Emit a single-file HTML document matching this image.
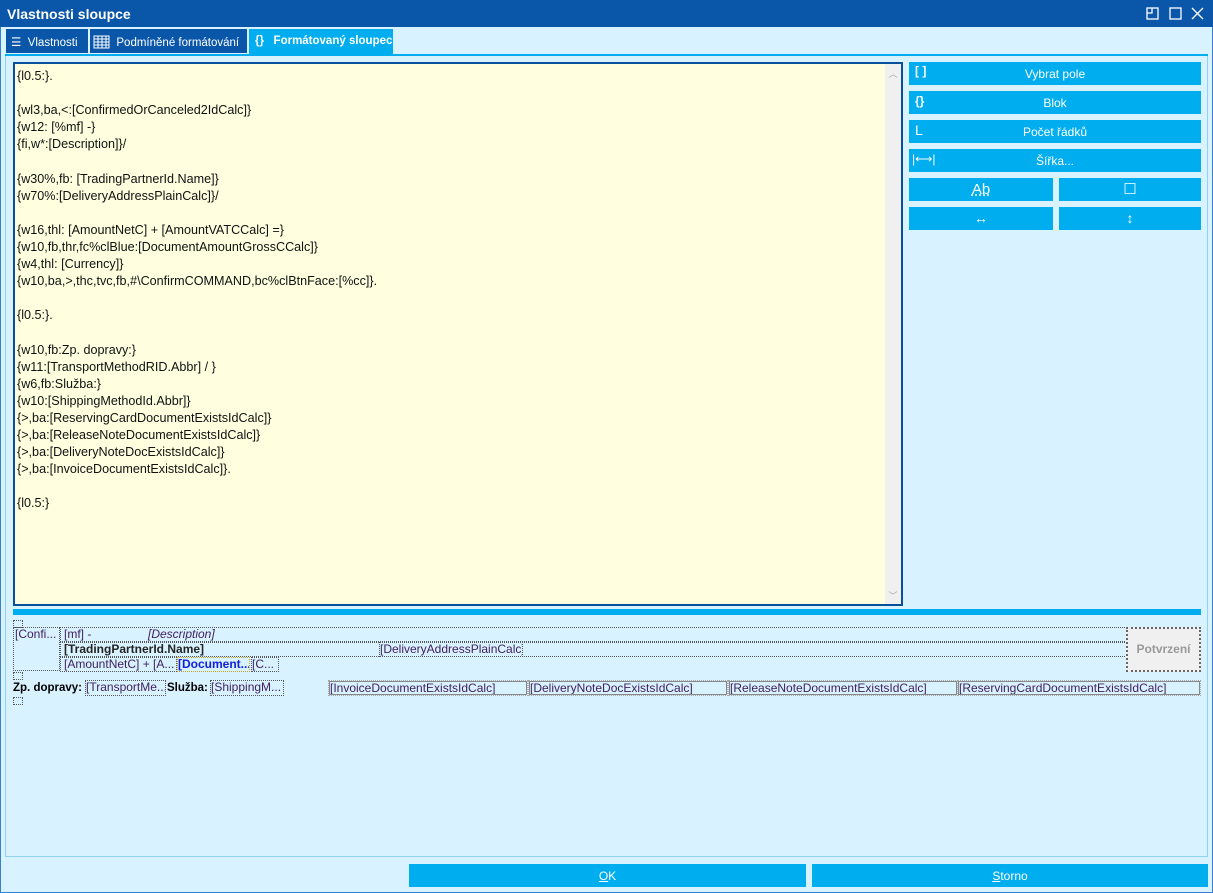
<!DOCTYPE html>
<html><head><meta charset="utf-8"><style>
*{box-sizing:border-box;margin:0;padding:0}
body{width:1213px;height:893px;background:#d9f2ff;font-family:"Liberation Sans",sans-serif;font-size:12px;position:relative;overflow:hidden}
.a{position:absolute}
#title{left:0;top:0;width:1213px;height:27px;background:#0a56a8;color:#fff;font-weight:bold;font-size:14px;padding:6px 7px}
.tab{top:29px;height:24px;background:#0a56a8;color:#fff;font-size:11.5px;padding:6px 0 0 0;white-space:nowrap;overflow:hidden}
.btn{background:#00adef;color:#fff;text-align:center;font-size:12px}
#ed{left:13px;top:62px;width:890px;height:544px;background:#ffffe0;border:2px solid #0a4f9a}
#ed pre{font-family:"Liberation Sans",sans-serif;font-size:12.6px;line-height:17.1px;color:#111;position:absolute;left:2px;top:4px}
.d{border:1px dotted #555;position:absolute;white-space:nowrap;overflow:hidden;color:#402060;font-size:12px;line-height:13px}
.g{border:1px solid #888;outline:1px dotted #aaa}
</style></head><body>
<div class="a" style="left:0;top:0;width:1213px;height:893px;border:1px solid #3a7fd0"></div>
<div id="title" class="a">Vlastnosti sloupce</div>
<svg class="a" style="left:1145px;top:6px" width="62" height="16" viewBox="0 0 62 16" fill="none" stroke="#fff" stroke-width="1.3">
<rect x="2" y="2" width="11" height="11"/><path d="M2 7H7V2"/>
<rect x="25" y="2" width="11" height="11"/>
<path d="M47 2L58 13M58 2L47 13"/></svg>
<div class="a tab" style="left:6px;width:82px"><span style="margin-left:5px">☰</span>&nbsp; Vlastnosti</div>
<div class="a tab" style="left:90px;width:157px"><svg width="17" height="14" style="vertical-align:-3px;margin-left:3px" viewBox="0 0 17 14" fill="none" stroke="#fff"><rect x="1" y="1" width="15" height="12"/><path d="M1 4H16M1 7H16M1 10H16M5 1V13M9 1V13M13 1V13"/></svg>&nbsp; Podmíněné formátování</div>
<div class="a tab" style="left:249px;width:144px;background:#00adef;font-weight:bold;height:25px"><span style="margin-left:6px">{}</span>&nbsp;&nbsp; Formátovaný sloupec</div>
<div class="a" style="left:5px;top:54px;width:1203px;height:2px;background:#00adef"></div>
<div class="a" style="left:5px;top:56px;width:1203px;height:801px;border:1px solid #8fd3f0;border-top:none"></div>
<div id="ed" class="a"><pre>{l0.5:}.

{wl3,ba,&lt;:[ConfirmedOrCanceled2IdCalc]}
{w12: [%mf] -}
{fi,w*:[Description]}/

{w30%,fb: [TradingPartnerId.Name]}
{w70%:[DeliveryAddressPlainCalc]}/

{w16,thl: [AmountNetC] + [AmountVATCCalc] =}
{w10,fb,thr,fc%clBlue:[DocumentAmountGrossCCalc]}
{w4,thl: [Currency]}
{w10,ba,&gt;,thc,tvc,fb,#\ConfirmCOMMAND,bc%clBtnFace:[%cc]}.

{l0.5:}.

{w10,fb:Zp. dopravy:}
{w11:[TransportMethodRID.Abbr] / }
{w6,fb:Služba:}
{w10:[ShippingMethodId.Abbr]}
{&gt;,ba:[ReservingCardDocumentExistsIdCalc]}
{&gt;,ba:[ReleaseNoteDocumentExistsIdCalc]}
{&gt;,ba:[DeliveryNoteDocExistsIdCalc]}
{&gt;,ba:[InvoiceDocumentExistsIdCalc]}.

{l0.5:}</pre>
<div class="a" style="right:0;top:0;width:16px;height:540px;background:#f0f0f0;color:#aaa;font-size:9px;text-align:center"><div style="margin-top:3px">︿</div><div style="position:absolute;bottom:2px;width:16px">﹀</div></div></div>
<div class="a btn" style="left:909px;top:62px;width:292px;height:23px;padding-top:5px">Vybrat pole<span class="a" style="left:6px;top:2px;font-weight:bold">[ ]</span></div>
<div class="a btn" style="left:909px;top:91px;width:292px;height:23px;padding-top:5px">Blok<span class="a" style="left:6px;top:3px;font-weight:bold">{}</span></div>
<div class="a btn" style="left:909px;top:120px;width:292px;height:23px;padding-top:5px">Počet řádků<span class="a" style="left:6px;top:2px;font-size:14px">L</span></div>
<div class="a btn" style="left:909px;top:149px;width:292px;height:23px;padding-top:5px">Šířka...<span class="a" style="left:3px;top:3px">|⟷|</span></div>
<div class="a btn" style="left:909px;top:178px;width:144px;height:23px;padding-top:3px;font-size:15px"><u style="text-decoration-style:dotted">Ab</u></div>
<div class="a btn" style="left:1059px;top:178px;width:142px;height:23px;padding-top:2px;font-size:15px">☐</div>
<div class="a btn" style="left:909px;top:207px;width:144px;height:23px;padding-top:3px;font-size:14px">↔</div>
<div class="a btn" style="left:1059px;top:207px;width:142px;height:23px;padding-top:3px;font-size:14px">↕</div>
<div class="a" style="left:13px;top:609px;width:1188px;height:6px;background:#00adef"></div>
<div class="d" style="left:13px;top:620px;width:10px;height:8px"></div>
<div class="d" style="left:13px;top:627px;width:47px;height:44px;padding-left:1px">[Confi...</div>
<div class="d" style="left:60px;top:627px;width:1067px;height:15px;padding-left:3px">[mf] -<span class="a" style="left:87px;top:0;font-style:italic">[Description]</span></div>
<div class="d" style="left:60px;top:642px;width:1067px;height:15px;padding-left:3px;font-weight:bold;color:#222">[TradingPartnerId.Name]</div>
<div class="d" style="left:379px;top:642px;width:144px;height:15px">[DeliveryAddressPlainCalc]</div>
<div class="d" style="left:60px;top:657px;width:117px;height:15px;padding-left:3px">[AmountNetC] + [A...</div>
<div class="d" style="left:177px;top:657px;width:73px;height:15px;color:#1020e0;font-weight:bold;border-color:#c8a020">[Document...</div>
<div class="d" style="left:251px;top:657px;width:28px;height:15px">[C...</div>
<div class="d" style="left:1126px;top:627px;width:75px;height:45px;background:#f0f0f0;border:2px dotted #666;color:#999;font-weight:bold;text-align:center;line-height:41px">Potvrzení</div>
<div class="d" style="left:13px;top:672px;width:10px;height:8px"></div>
<div class="a" style="left:13px;top:682px;font-weight:bold;font-size:11.5px">Zp. dopravy:</div>
<div class="d" style="left:85px;top:680px;width:81px;height:16px">[TransportMe...</div>
<div class="a" style="left:167px;top:682px;font-weight:bold;font-size:11.5px">Služba:</div>
<div class="d" style="left:210px;top:680px;width:74px;height:16px">[ShippingM...</div>
<div class="d g" style="left:329px;top:681px;width:198px;height:14px">[InvoiceDocumentExistsIdCalc]</div>
<div class="d g" style="left:529px;top:681px;width:198px;height:14px">[DeliveryNoteDocExistsIdCalc]</div>
<div class="d g" style="left:729px;top:681px;width:228px;height:14px">[ReleaseNoteDocumentExistsIdCalc]</div>
<div class="d g" style="left:958px;top:681px;width:242px;height:14px">[ReservingCardDocumentExistsIdCalc]</div>
<div class="d" style="left:13px;top:697px;width:10px;height:8px"></div>
<div class="a btn" style="left:409px;top:864px;width:397px;height:23px;padding-top:5px"><u>O</u>K</div>
<div class="a btn" style="left:812px;top:864px;width:396px;height:23px;padding-top:5px"><u>S</u>torno</div>
</body></html>
